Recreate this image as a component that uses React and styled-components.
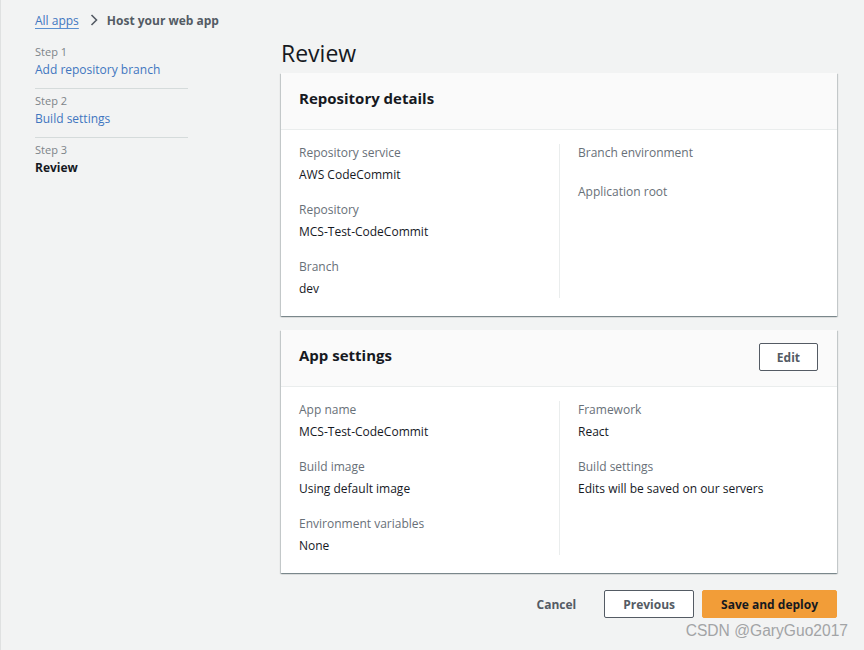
import React from "react";
import styled, { createGlobalStyle } from "styled-components";

const Global = createGlobalStyle`
  html, body { margin: 0; padding: 0; background: #f2f3f3; }
  body { font-family: "Open Sans", "Noto Sans", sans-serif; color: #16191f; }
  * { box-sizing: border-box; }
`;

const Page = styled.div`
  position: relative;
  min-height: 650px;
  border-left: 1px solid #dfe1e1;
  padding: 0 27px 0 34px;
`;

const Breadcrumbs = styled.nav`
  display: flex;
  align-items: center;
  height: 30px;
  padding-top: 10px;
  font-size: 12px;
`;

const Crumb = styled.a`
  color: #3f76c0;
  text-decoration: underline;
  text-decoration-color: #5a8fd0;
  text-underline-offset: 3px;
  text-decoration-thickness: 1px;
`;

const CrumbSep = styled.span`
  display: flex;
  margin: 0 9px 0 11px;
`;

const CrumbCurrent = styled.span`
  color: #545b64;
  font-weight: 700;
`;

const Layout = styled.div`
  display: grid;
  grid-template-columns: 153px 1fr;
  column-gap: 93px;
`;

const SideNav = styled.ol`
  list-style: none;
  margin: 0;
  padding: 14px 0 0;
`;

const Step = styled.li`
  padding: ${(p) => (p.$first ? "0" : "4px")} 0 9px;
  border-bottom: ${(p) => (p.$last ? "none" : "1px solid #d5dbdb")};
`;

const StepLabel = styled.div`
  font-size: 11px;
  line-height: 16px;
  color: #7d8489;
`;

const StepLink = styled.a`
  display: block;
  margin-top: 1px;
  font-size: 12px;
  line-height: 18px;
  color: ${(p) => (p.$current ? "#16191f" : "#3f76c0")};
  font-weight: ${(p) => (p.$current ? 700 : 400)};
  text-decoration: none;
`;

const Main = styled.main`
  display: flex;
  flex-direction: column;
`;

const Title = styled.h1`
  margin: 8px 0 5px;
  font-size: 23px;
  line-height: 30px;
  font-weight: 400;
  color: #16191f;
`;

const Card = styled.section`
  background: #fff;
  box-shadow: 0 1px 1px 0 rgba(0, 28, 36, 0.3), 1px 1px 1px 0 rgba(0, 28, 36, 0.15),
    -1px 1px 1px 0 rgba(0, 28, 36, 0.15);
  & + & {
    margin-top: 14px;
  }
`;

const CardHeader = styled.header`
  display: flex;
  align-items: center;
  justify-content: space-between;
  height: 57px;
  padding: 0 18px;
  background: #fafafa;
  border-bottom: 1px solid #eaeded;
`;

const CardTitle = styled.h2`
  margin: 0 0 6px;
  font-size: 15px;
  line-height: 22px;
  font-weight: 700;
  color: #16191f;
`;

const CardBody = styled.div`
  display: grid;
  grid-template-columns: 1fr 1fr;
  padding: 14px 18px 18px;
`;

const Column = styled.div`
  display: flex;
  flex-direction: column;
  gap: 17px;
  ${(p) => p.$divided && "border-left: 1px solid #eaeded; padding-left: 18px;"}
`;

const Field = styled.div`
  display: flex;
  flex-direction: column;
  gap: 4px;
`;

const Label = styled.div`
  font-size: 12px;
  line-height: 18px;
  color: #687078;
`;

const Value = styled.div`
  font-size: 12px;
  line-height: 18px;
  color: #16191f;
  &:empty {
    line-height: 0;
  }
`;

const Button = styled.button`
  height: 28px;
  padding: 0 ${(p) => (p.$variant === "link" ? "19px" : "18px")};
  font-family: inherit;
  font-size: 12px;
  font-weight: 700;
  border-radius: 2px;
  cursor: pointer;
  color: ${(p) => (p.$variant === "primary" ? "#16191f" : "#545b64")};
  background: ${(p) => (p.$variant === "primary" ? "#f29d38" : p.$variant === "link" ? "transparent" : "#fff")};
  border: 1px solid
    ${(p) => (p.$variant === "primary" ? "#f29d38" : p.$variant === "link" ? "transparent" : "#545b64")};
  ${(p) => p.$size === "sm" && "padding: 0 17px; margin: -2px 1px 0 0;"}
`;

const Actions = styled.div`
  display: flex;
  justify-content: flex-end;
  align-items: center;
  gap: 8px;
  margin-top: 17px;
`;

const Watermark = styled.div`
  position: absolute;
  right: 16px;
  bottom: 10px;
  font-family: "Liberation Sans", Arial, sans-serif;
  font-size: 15.6px;
  color: #a2a4a6;
`;

const Chevron = () => (
  <svg width="8" height="12" viewBox="0 0 8 12">
    <path d="M1.5 1l5 5-5 5" fill="none" stroke="#545b64" strokeWidth="1.6" />
  </svg>
);

const FieldList = ({ items, divided }) => (
  <Column $divided={divided}>
    {items.map(([l, v]) => (
      <Field key={l}>
        <Label>{l}</Label>
        <Value>{v}</Value>
      </Field>
    ))}
  </Column>
);

const DetailCard = ({ title, action, left, right }) => (
  <Card>
    <CardHeader>
      <CardTitle>{title}</CardTitle>
      {action}
    </CardHeader>
    <CardBody>
      <FieldList items={left} />
      <FieldList items={right} divided />
    </CardBody>
  </Card>
);

export default function App() {
  return (
    <>
      <Global />
      <Page>
        <Breadcrumbs>
          <Crumb href="#">All apps</Crumb>
          <CrumbSep>
            <Chevron />
          </CrumbSep>
          <CrumbCurrent>Host your web app</CrumbCurrent>
        </Breadcrumbs>
        <Layout>
          <SideNav>
            <Step $first>
              <StepLabel>Step 1</StepLabel>
              <StepLink href="#">Add repository branch</StepLink>
            </Step>
            <Step>
              <StepLabel>Step 2</StepLabel>
              <StepLink href="#">Build settings</StepLink>
            </Step>
            <Step $last>
              <StepLabel>Step 3</StepLabel>
              <StepLink $current>Review</StepLink>
            </Step>
          </SideNav>
          <Main>
            <Title>Review</Title>
            <DetailCard
              title="Repository details"
              left={[
                ["Repository service", "AWS CodeCommit"],
                ["Repository", "MCS-Test-CodeCommit"],
                ["Branch", "dev"],
              ]}
              right={[
                ["Branch environment", ""],
                ["Application root", ""],
              ]}
            />
            <DetailCard
              title="App settings"
              action={<Button $size="sm">Edit</Button>}
              left={[
                ["App name", "MCS-Test-CodeCommit"],
                ["Build image", "Using default image"],
                ["Environment variables", "None"],
              ]}
              right={[
                ["Framework", "React"],
                ["Build settings", "Edits will be saved on our servers"],
              ]}
            />
            <Actions>
              <Button $variant="link">Cancel</Button>
              <Button>Previous</Button>
              <Button $variant="primary">Save and deploy</Button>
            </Actions>
          </Main>
        </Layout>
        <Watermark>CSDN @GaryGuo2017</Watermark>
      </Page>
    </>
  );
}
